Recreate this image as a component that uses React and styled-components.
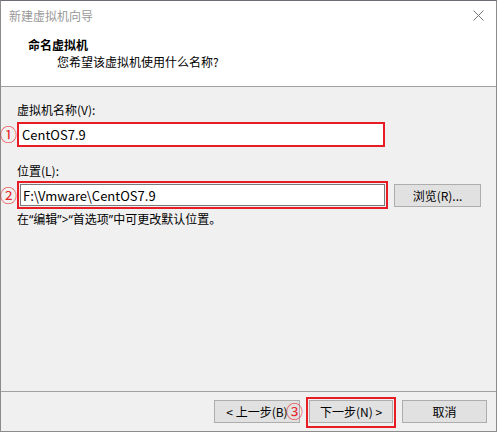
import styled, { createGlobalStyle } from "styled-components";

const GlobalStyle = createGlobalStyle`
  html, body {
    margin: 0;
    padding: 0;
    background: #ffffff;
  }
  body {
    font-family: "Noto Sans CJK SC", "Noto Sans", sans-serif;
    font-size: 12px;
    color: #000;
  }
`;

const Window = styled.div`
  width: 497px;
  height: 432px;
  display: flex;
  flex-direction: column;
  border-left: 1px solid #8c8c8c;
  border-right: 1px solid #8c8c8c;
  border-bottom: 1px solid #8c8c8c;
  border-top: 1px solid #6d6d7a;
  box-sizing: border-box;
  background: #f0f0f0;
  position: relative;
`;

const TitleBar = styled.div`
  height: 29px;
  display: flex;
  align-items: center;
  justify-content: space-between;
  background: #fff;
  padding: 0 8px 0 8px;
`;

const Title = styled.span`
  color: #999;
  font-size: 12px;
`;

const Close = styled.svg`
  width: 11px;
  height: 11px;
  margin-right: 4px;
`;

const Header = styled.div`
  height: 57px;
  background: #fff;
  border-bottom: 1px solid #a0a0a0;
  padding: 6px 0 0 27px;
  box-sizing: border-box;
`;

const Heading = styled.div`
  font-weight: bold;
  font-size: 12px;
  line-height: 17px;
`;

const Sub = styled.div`
  padding-left: 29px;
  line-height: 18px;
  font-size: 12px;
`;

const Body = styled.div`
  flex: 1;
  padding: 14px 0 0 16px;
  display: flex;
  flex-direction: column;
`;

const Label = styled.div`
  line-height: 17px;
  margin-bottom: ${(p) => p.$gap || 0}px;
`;

const Row = styled.div`
  display: flex;
  align-items: center;
  gap: 6px;
  margin-bottom: ${(p) => p.$mb || 0}px;
  position: relative;
`;

const Mark = styled.span`
  position: absolute;
  color: #e8262b;
  font-size: 17px;
  line-height: 17px;
  left: ${(p) => p.$left}px;
  top: ${(p) => p.$top}px;
`;

const RedBox = styled.div`
  border: 2px solid #e81c24;
  width: ${(p) => p.$w}px;
  height: ${(p) => p.$h}px;
  box-sizing: border-box;
  padding: ${(p) => p.$pad || 0}px;
  display: flex;
`;

const Field = styled.div`
  flex: 1;
  background: #fff;
  display: flex;
  align-items: center;
  padding-left: ${(p) => p.$pl || 3}px;
  font-size: 13px;
  border: ${(p) => (p.$bordered ? "1px solid #7a7a7a" : "none")};
`;

const Button = styled.div`
  width: ${(p) => p.$w || 86}px;
  height: 23px;
  box-sizing: border-box;
  background: #e1e1e1;
  border: 1px solid #adadad;
  display: flex;
  align-items: center;
  justify-content: center;
  font-size: 12px;
`;

const Hint = styled.div`
  margin-top: 1px;
  line-height: 17px;
`;

const Quote = styled.span`
  font-family: "Noto Sans", sans-serif;
`;

const Footer = styled.div`
  height: 40px;
  border-top: 1px solid #a0a0a0;
  display: flex;
  align-items: flex-start;
  padding: 8px 0 0 213px;
  box-sizing: border-box;
  position: relative;
`;

const NextFrame = styled.div`
  border: 2px solid #e81c24;
  padding: 1px;
  margin: -3px 6px 0 6px;
  height: 25px;
  display: flex;
`;

export default function App() {
  return (
    <>
      <GlobalStyle />
      <Window>
        <TitleBar>
          <Title>新建虚拟机向导</Title>
          <Close viewBox="0 0 11 11">
            <path d="M0.5 0.5 L10.5 10.5 M10.5 0.5 L0.5 10.5" stroke="#777" strokeWidth="1" />
          </Close>
        </TitleBar>
        <Header>
          <Heading>命名虚拟机</Heading>
          <Sub>您希望该虚拟机使用什么名称?</Sub>
        </Header>
        <Body>
          <Label $gap={4}>虚拟机名称(V):</Label>
          <Row $mb={15}>
            <Mark $left={-17} $top={3}>①</Mark>
            <RedBox $w={368} $h={25}>
              <Field $pl={3}>CentOS7.9</Field>
            </RedBox>
          </Row>
          <Label $gap={2}>位置(L):</Label>
          <Row>
            <Mark $left={-17} $top={5}>②</Mark>
            <RedBox $w={371} $h={28} $pad={1}>
              <Field $bordered $pl={2}>F:\Vmware\CentOS7.9</Field>
            </RedBox>
            <Button $w={87}>浏览(R)...</Button>
          </Row>
          <Hint>
            在<Quote>“</Quote>编辑<Quote>”&gt;“</Quote>首选项<Quote>”</Quote>中可更改默认位置。
          </Hint>
        </Body>
        <Footer>
          <Button>&lt; 上一步(B)</Button>
          <Mark $left={285} $top={10}>③</Mark>
          <NextFrame>
            <Button $w={84}>下一步(N) &gt;</Button>
          </NextFrame>
          <Button $w={85}>取消</Button>
        </Footer>
      </Window>
    </>
  );
}
